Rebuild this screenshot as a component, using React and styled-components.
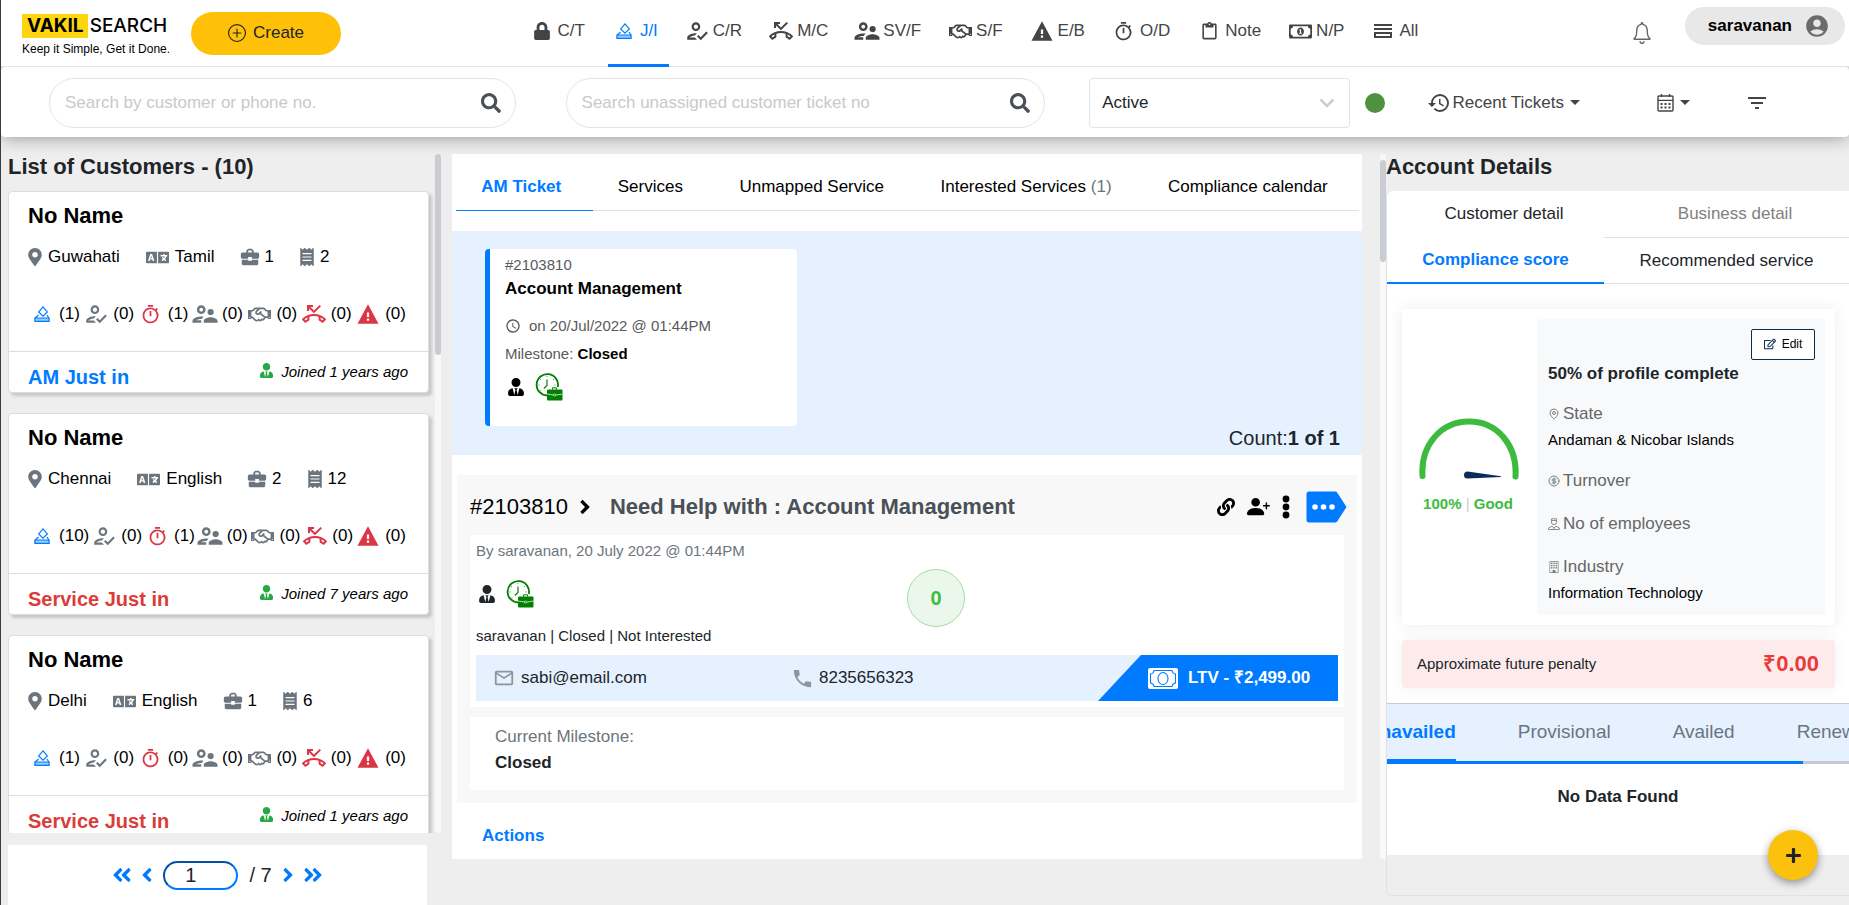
import React, { useEffect, useRef } from "react";
import styled, { createGlobalStyle } from "styled-components";
import {
  FaLock, FaRegHandshake, FaRegMoneyBillAlt, FaSearch, FaMapMarkerAlt, FaLanguage, FaReceipt,
  FaUserTie, FaAngleDoubleLeft, FaAngleDoubleRight, FaAngleLeft, FaAngleRight, FaLink, FaRegEdit, FaPlus,
} from "react-icons/fa";
import {
  MdOutlineHowToReg, MdOutlinePhoneMissed, MdOutlineSupervisorAccount, MdOutlineTimer,
  MdOutlineContentPaste, MdAccountCircle, MdHistory, MdFilterList, MdBusinessCenter,
  MdMailOutline, MdPhone, MdAccessTime,
} from "react-icons/md";
import { IoMdWarning, IoIosNotificationsOutline } from "react-icons/io";
import { BsPersonPlusFill, BsBuilding, BsPlusCircle } from "react-icons/bs";
import { MapPin, CircleDollarSign } from "lucide-react";

const color = {
  blue: "#007bff", red: "#dc3545", grey: "#6c757d", ink: "#212529", icon: "#444444",
  sky: "#e5f1ff", line: "#dee2e6", green: "#3dbb3d", yellow: "#ffc107",
};

const GlobalStyle = createGlobalStyle`
  *, *::before, *::after { box-sizing: border-box; }
  body { margin: 0; background: #eeeeee; color: ${color.ink}; font: 17px/22px "Liberation Sans", Arial, sans-serif; }
  button, input, select { font: inherit; color: inherit; }
  button { background: none; border: 0; padding: 0; cursor: pointer; }
  h1, h2, h3, p, ul, dl, dd { margin: 0; padding: 0; }
  ul { list-style: none; }
  a { color: inherit; text-decoration: none; }
  svg { flex: none; display: block; }
`;

/* ---------- drawings ---------- */

const VoteIcon = ({ size = 16 }) => (
  <svg width={size} height={size} viewBox="0 0 16 16" fill="none" stroke="currentColor" strokeWidth="1.2">
    <path d="M9 .9l4.300 5-4.300 4.200-4.300-4.200z" />
    <path d="M4.600 9L1.200 12M13 9l1.800 3" />
    <path d="M.9 12h14.200v3.300H.9z" fill="currentColor" fillOpacity=".4" />
  </svg>
);

const ListIcon = () => (
  <svg width="18" height="16" viewBox="0 0 18 16" fill="currentColor">
    <path d="M0 1h18v2H0zM0 5h18v2H0zM0 9h18v6H0zm2 2v2h14v-2z" fillRule="evenodd" />
  </svg>
);

const CalendarIcon = () => (
  <svg width="17" height="18" viewBox="0 0 17 18" fill="none" stroke="currentColor" strokeWidth="1.4">
    <rect x="1" y="2" width="15" height="15" rx="1" />
    <path d="M1 6.4h15M4.5 0v3M12.500 0v3" />
    <path d="M3.500 10h10M3.500 13.400h10" strokeWidth="2" strokeDasharray="2 2" />
  </svg>
);

const ShiftIcon = () => (
  <svg width="28" height="28" viewBox="0 0 28 28" fill="none" stroke="green">
    <path d="M12.500 22.500A10.700 10.700 0 1 1 22.800 14" strokeWidth="1.800" />
    <path d="M12 6.500v6l-3.200 3" strokeWidth="1.200" />
    <path d="M12 3.200v1M5 6l.8.8M3.500 12h1M19 6l-.8.8M20.500 12h-1M5.500 18l.8-.8" strokeWidth=".8" />
    <path d="M17.500 16.500v-1.700h4v1.700" />
    <rect x="12" y="16.500" width="15.500" height="11" rx="1" fill="green" stroke="none" />
    <path d="M12 21l6.500 1h3l6-1" stroke="#fff" strokeWidth=".7" />
    <rect x="18.300" y="21" width="2.600" height="2" rx="1" fill="green" stroke="#fff" strokeWidth=".6" />
  </svg>
);

const DotsIcon = () => (
  <svg width="8" height="24" viewBox="0 0 8 24" fill="currentColor">
    <circle cx="4" cy="4" r="3.400" /><circle cx="4" cy="12" r="3.400" /><circle cx="4" cy="20" r="3.400" />
  </svg>
);

const TagIcon = () => (
  <svg width="41" height="32" viewBox="0 0 41 32">
    <path d="M3 .5h26q1.500 0 2.300 1.200L40.500 16l-9.200 14.300q-.8 1.200-2.300 1.200H3q-2.500 0-2.500-2.500V3Q.5.5 3 .5z" fill={color.blue} />
    <g fill="#fff"><circle cx="9" cy="16" r="2.800" /><circle cx="17.500" cy="16" r="2.800" /><circle cx="26" cy="16" r="2.800" /></g>
  </svg>
);

const NoteBillIcon = () => (
  <svg width="30" height="21" viewBox="0 0 30 21" fill="none" stroke={color.blue} strokeWidth="1.100">
    <rect width="30" height="21" rx="2" fill="#fff" stroke="none" />
    <path d="M6 2.500h18a4 4 0 0 0 3.500 3.500v9a4 4 0 0 0-3.500 3.500H6A4 4 0 0 0 2.500 15V6A4 4 0 0 0 6 2.500z" />
    <ellipse cx="15" cy="10.500" rx="5" ry="6" />
  </svg>
);

const EmployeeIcon = () => (
  <svg width="12" height="12" viewBox="0 0 12 12" fill="none" stroke="currentColor" strokeWidth=".9">
    <path d="M3.500.8h5v3.400a2.500 2.500 0 0 1-5 0zM3.500 2.500h5M.6 11.500V10l3.400-1.800L6 10l2-1.800L11.400 10v1.500zM6 10v1.500" />
  </svg>
);

const Gauge = () => (
  <svg width="100" height="64" viewBox="0 0 100 64" fill="none">
    <path d="M3.500 58C1.500 27 22 3.500 50 3.500S98.500 27 96.500 58.500" stroke={color.green} strokeWidth="6" strokeLinecap="round" />
    <path d="M48.500 53.500L82 58.200v.7L48.500 60.500a3.500 3.500 0 0 1 0-7z" fill="#0b2d55" />
  </svg>
);

/* ---------- page frame ---------- */

const Page = styled.div`
  height: 100vh; min-height: 640px; min-width: 1400px;
  display: flex; flex-direction: column; overflow: hidden;
  border-left: 1px solid #3a3a48; position: relative;
`;

const TopBar = styled.header`
  display: flex; align-items: center; height: 67px; flex: none; position: relative; z-index: 2;
  padding: 0 4px 0 21px; background: #fff; border-bottom: 1px solid #e4e4e4;
`;

const Logo = styled.a`
  display: block; width: 149px; padding-top: 4px; color: #000; font-size: 12px; line-height: 14px; white-space: nowrap;
  div { display: flex; align-items: center; font: 500 19px/24px Inter, sans-serif; margin-bottom: 4px; }
  b { background: #ffd50f; padding: 0 4px 0 5px; margin-right: 2px; font-weight: 700; }
`;

const CreateButton = styled.button`
  display: flex; align-items: center; justify-content: center; gap: 7px;
  width: 150px; height: 43px; margin-left: 20px; border-radius: 22px; background: ${color.yellow};
`;

const Nav = styled.nav` display: flex; gap: 12px; margin: 0 auto; padding-right: 14px; `;

const NavTab = styled.button`
  display: flex; align-items: center; height: 67px; padding: 0 11px 4px 0;
  color: ${p => (p.$active ? color.blue : color.icon)};
  box-shadow: ${p => (p.$active ? `inset 0 -3px 0 ${color.blue}` : "none")};
  span { width: 32px; display: flex; justify-content: center; }
`;

const BellButton = styled.button` margin-right: 29px; color: #666; `;

const UserButton = styled.button`
  display: flex; align-items: center; gap: 12px; height: 38px; padding: 0 15px 0 23px;
  margin-bottom: 15px; border-radius: 19px; background: #e8e8e8; color: #000; font-weight: bold;
  svg { color: #6b6b6b; }
`;

const FilterBar = styled.div`
  display: flex; align-items: center; height: 70px; flex: none; padding: 1px 80px 0 48px;
  background: #fff; border-radius: 4px; box-shadow: 0 0 18px rgba(0, 0, 0, 0.4); position: relative; z-index: 1;
`;

const SearchBox = styled.form`
  display: flex; align-items: center; flex: ${p => p.$grow} 1 0; height: 50px;
  padding: 0 14px 0 15px; border: 1px solid #e4e4e4; border-radius: 25px; color: #495057;
  margin-right: ${p => p.$after};
  input { flex: 1; min-width: 0; border: 0; padding: 0; outline: 0; background: none; }
  input::placeholder { color: #c9c9c9; opacity: 1; }
`;

const StatusField = styled.div`
  flex: 232 1 0; display: flex; align-items: center; height: 50px; padding: 0 14px 0 12px;
  border: 1px solid #e4e4e4; border-radius: 4px; color: #cccccc;
  select { flex: 1; border: 0; background: none; appearance: none; outline: 0; padding: 0; color: ${color.ink}; }
`;

const OnlineDot = styled.span` width: 20px; height: 20px; margin: 0 42px 0 15px; border-radius: 50%; background: #50913f; `;

const MenuButton = styled.button`
  display: flex; align-items: center; gap: 2px; color: ${color.icon}; margin-right: ${p => p.$after || "0"};
`;

const Caret = styled.i` border: 5px solid transparent; border-top-color: currentColor; border-bottom: 0; margin-left: 4px; `;

const Main = styled.main`
  flex: 1; min-height: 0; display: grid; column-gap: 11px; padding: 17px 0 0 7px;
  grid-template-columns: minmax(0, 433fr) minmax(0, 910fr) minmax(0, 476fr);
`;

const PaneTitle = styled.h2` font-size: 22px; line-height: 26px; margin-bottom: 11px; `;

const ScrollBar = styled.div`
  width: 6px; flex: none; border-radius: 3px; background: #f8f8f8; padding-top: ${p => p.$top || "0"};
  &::before { content: ""; display: block; height: ${p => p.$thumb}; border-radius: 3px; background: #c9cdd1; }
`;

/* ---------- customer list ---------- */

const ListPane = styled.section` display: flex; flex-direction: column; min-height: 0; `;
const ListScroll = styled.div` display: flex; flex: 1; min-height: 0; `;
const ListBody = styled.div`
  flex: 1; min-width: 0; padding: 0 6px 0 0; overflow-y: auto; scrollbar-width: none; border-radius: 0 0 0 4px;
`;

const CustomerCard = styled.article`
  margin-bottom: 20px; background: #fff; color: #000; border: 1px solid #dddddd; border-radius: 4px;
  box-shadow: 3px 3px 3px rgba(0, 0, 0, 0.16); padding-top: 11px;
  h3 { font-size: 22px; line-height: 26px; padding: 0 19px; }
`;

const FactRow = styled.ul`
  display: flex; gap: 26px; margin: 17px 19px 0; height: 22px;
  li { display: flex; align-items: center; gap: 6px; }
`;

const FactIcon = styled.span` width: ${p => p.$w}; display: flex; justify-content: center; color: ${color.grey}; `;

const CountRow = styled.ul`
  display: flex; justify-content: space-between; align-items: center; height: 24px; margin: 34px 22px 25px 20px;
`;

const CountItem = styled.li`
  display: flex; align-items: center; gap: 4px;
  span { width: 26px; display: flex; justify-content: center; color: ${p => p.$tint}; }
`;

const CardFoot = styled.footer`
  display: flex; justify-content: space-between; align-items: flex-start; height: 41px;
  padding: 11px 20px 0 19px; border-top: 1px solid #dddddd;
  strong { font-size: 20px; line-height: 24px; padding-top: 2px; color: ${p => p.$tint}; }
  em { display: flex; gap: 7px; font-size: 15px; line-height: 18px; }
  svg { color: #28a745; }
`;

const Pager = styled.form`
  display: flex; align-items: center; justify-content: center; gap: 11px; height: 60px; margin: 12px 14px 0 0;
  background: #fff; color: ${color.blue}; font-size: 20px;
  input {
    width: 75px; height: 29px; border: 2px inset ${color.blue}; border-radius: 15px;
    background: #fff; color: ${color.ink}; text-align: center; padding: 0 20px 0 0; outline: 0;
  }
  span { color: ${color.ink}; }
`;
const PageButton = styled.button` display: flex; justify-content: center; width: ${p => p.$w}; `;

/* ---------- ticket pane ---------- */

const TicketPane = styled.section` align-self: start; background: #fff; padding-bottom: 12px; `;

const Tabs = styled.div` display: flex; margin: 0 3px 0 4px; `;
const Tab = styled.button`
  flex: 1 1 auto; padding: 21px 6px 11px 0; line-height: 24px; color: ${p => (p.$active ? color.blue : "#000")};
  font-weight: ${p => (p.$active ? "bold" : "normal")};
  border-bottom: 1px solid ${p => (p.$active ? color.blue : color.line)};
  span { color: ${color.grey}; }
`;

const TicketStrip = styled.div` margin-top: 20px; padding: 18px 22px 5px 33px; background: ${color.sky}; `;
const TicketCard = styled.article`
  width: 312px; min-height: 177px; padding: 7px 15px; background: #fff; color: #5a5a5a;
  border-left: 5px solid ${color.blue}; border-radius: 4px; font-size: 15px; line-height: 18px;
  h3 { font-size: 17px; line-height: 22px; margin: 4px 0 17px; color: #000; }
  b { color: #000; }
`;
const TimeLine = styled.p` display: flex; align-items: center; gap: 8px; margin-bottom: 10px; `;
const BadgeRow = styled.div` display: flex; align-items: center; gap: 10px; height: 28px; margin-top: ${p => p.$top}; padding-left: 2px; color: ${p => p.$tint}; `;
const CountLine = styled.p` text-align: right; font-size: 20px; line-height: 24px; `;

const Detail = styled.section` margin: 20px 5px 0; padding-bottom: 13px; background: #f8f8f8; `;
const DetailHead = styled.header`
  display: flex; align-items: center; height: 60px; padding: 3px 10px 0 13px; font-size: 22px; color: #000;
  > svg { margin: 0 14px 0 6px; }
  h2 { flex: 1; font-size: 22px; line-height: 26px; color: #495057; }
`;
const Actions = styled.div`
  display: flex; align-items: center;
  button + button { margin-left: 12px; }
  button:last-child { margin-left: 16px; }
`;

const WhiteBox = styled.div`
  margin: 0 13px ${p => p.$after || "0"}; padding: ${p => p.$pad}; background: #fff;
`;
const Summary = styled.div`
  display: grid; grid-template-columns: 1fr 1fr; font-size: 15px; line-height: 18px; margin-bottom: 10px;
  small { font-size: 15px; color: ${color.grey}; }
  p { margin-top: 19px; }
`;
const Score = styled.div`
  width: 58px; height: 58px; margin-top: 27px; display: grid; place-items: center; border-radius: 50%;
  border: 1px solid #a3dda3; background: #ebf7eb; color: ${color.green}; font-size: 20px; font-weight: bold;
`;
const ContactBar = styled.div`
  display: grid; grid-template-columns: 315fr 307fr 240px; height: 46px; background: ${color.sky};
  a { display: flex; align-items: center; gap: 5px; }
  a:first-child { padding-left: 17px; gap: 6px; }
  a svg { color: #8f959b; }
`;
const Ltv = styled.div`
  display: flex; align-items: center; gap: 10px; padding-left: 50px; background: ${color.blue}; color: #fff;
  font-weight: bold; clip-path: polygon(43px 0, 100% 0, 100% 100%, 0 100%);
`;
const Milestone = styled.dl` dt { color: ${color.grey}; margin-bottom: 4px; } dd { font-weight: bold; } `;
const ActionsTitle = styled.h3` margin: 22px 30px 0; font-size: 17px; color: ${color.blue}; `;

/* ---------- account pane ---------- */

const AccountPane = styled.section` display: flex; padding-left: 7px; min-height: 0; `;
const AccountBody = styled.div` flex: 1; min-width: 0; `;
const AccountScroll = styled(ScrollBar)` align-self: flex-start; height: 705px; `;
const Panel = styled.div`
  border: solid ${color.line}; border-width: 0 0 1px 1px; border-radius: 6px 0 0 6px; padding-bottom: 40px;
  margin-bottom: 8px; overflow: hidden;
`;
const PanelTabs = styled.div` display: grid; background: #fff; grid-template-columns: ${p => p.$cols}; `;
const PanelTab = styled.button`
  padding: 12px 0; color: ${p => (p.$active ? color.blue : p.$muted ? "#808080" : color.ink)};
  font-weight: ${p => (p.$active ? "bold" : "normal")};
`;
const LinedTab = styled(PanelTab)`
  padding: 11px 0; border-top: 1px solid ${p => (p.$active ? "transparent" : color.line)};
  border-bottom: ${p => (p.$active ? `2px solid ${color.blue}` : `1px solid ${color.line}`)};
`;
const PanelBody = styled.div` background: #fff; padding: 25px 14px 15px 15px; `;
const ScoreCard = styled.div`
  display: grid; grid-template-columns: 135px minmax(0, 1fr); padding: 10px 10px 10px 0;
  border-radius: 4px; box-shadow: 0 0 16px rgba(0, 0, 0, 0.08);
`;
const GaugeBox = styled.div`
  padding: 99px 0 0 17px; font-size: 15px; line-height: 18px; font-weight: bold; color: ${color.green};
  p { width: 98px; text-align: center; margin-top: 13px; }
  i { font-style: normal; font-weight: normal; color: #cccccc; }
`;
const Profile = styled.div`
  padding: 10px 10px 13px 11px; border-radius: 4px; background: #f7f9fb;
  h3 { font-size: 17px; margin: 3px 0 18px; }
`;
const EditButton = styled.button`
  display: flex; align-items: center; justify-content: center; gap: 6px; width: 64px; height: 31px; margin-left: auto;
  padding-bottom: 2px; border: 1px solid #0b2d55; border-radius: 2px; background: #fff; font-size: 12px; color: #000;
  svg { color: #0b2d55; }
`;
const Field = styled.dl`
  dt { display: flex; align-items: center; gap: 3px; color: #666666; }
  dt svg { color: #808080; }
  dd { font-size: 15px; line-height: 18px; margin-top: 6px; color: #000; }
  & + & { margin-top: 21px; }
`;
const Penalty = styled.div`
  display: flex; align-items: center; justify-content: space-between; height: 48px; padding: 0 16px 0 15px; margin-top: 15px;
  border-radius: 4px; background: #fdebeb; box-shadow: 0 0 16px rgba(0, 0, 0, 0.06); font-size: 15px;
  strong { font-size: 22px; color: #e93b3b; }
`;
const ServiceTabs = styled.div`
  display: flex; gap: 62px; overflow-x: auto; scrollbar-width: none; background: ${color.sky};
  border-top: 1px solid #c5cad0;
`;
const ServiceTab = styled.button`
  flex: none; padding: 16px 0 15px; font-size: 19px; line-height: 24px;
  color: ${p => (p.$active ? color.blue : color.grey)}; font-weight: ${p => (p.$active ? "bold" : "normal")};
  border-bottom: 2px solid ${p => (p.$active ? color.blue : "transparent")};
  &:last-child { padding-right: 60px; }
`;
const Track = styled.div` height: 3px; background: #c5cad0; &::before { content: ""; display: block; height: 3px; width: 90%; background: ${color.blue}; } `;
const Empty = styled.p` padding: 22px 0 47px; background: #fff; text-align: center; font-weight: bold; `;

const Fab = styled.button`
  position: fixed; right: 31px; bottom: 25px; z-index: 2; width: 50px; height: 50px; border-radius: 50%;
  display: grid; place-items: center; background: #fbc10d; box-shadow: 0 3px 8px rgba(0, 0, 0, 0.4);
`;

/* ---------- data ---------- */

const navTabs = [
  ["C/T", <FaLock size={18} />],
  ["J/I", <VoteIcon />],
  ["C/R", <MdOutlineHowToReg size={26} />],
  ["M/C", <MdOutlinePhoneMissed size={24} />],
  ["SV/F", <MdOutlineSupervisorAccount size={30} />],
  ["S/F", <FaRegHandshake size={23} />],
  ["E/B", <IoMdWarning size={24} />],
  ["O/D", <MdOutlineTimer size={21} />],
  ["Note", <MdOutlineContentPaste size={19} />],
  ["N/P", <FaRegMoneyBillAlt size={23} />],
  ["All", <ListIcon />],
];

const countIcons = [
  [<VoteIcon />, color.blue],
  [<MdOutlineHowToReg size={26} />, color.grey],
  [<MdOutlineTimer size={21} />, color.red],
  [<MdOutlineSupervisorAccount size={30} />, color.grey],
  [<FaRegHandshake size={23} />, color.grey],
  [<MdOutlinePhoneMissed size={24} />, color.red],
  [<IoMdWarning size={24} />, color.red],
];

const customers = [
  { name: "No Name", city: "Guwahati", lang: "Tamil", cases: 1, bills: 2, counts: [1, 0, 1, 0, 0, 0, 0], state: "AM Just in", tint: color.blue, years: 1 },
  { name: "No Name", city: "Chennai", lang: "English", cases: 2, bills: 12, counts: [10, 0, 1, 0, 0, 0, 0], state: "Service Just in", tint: "#dc3c37", years: 7 },
  { name: "No Name", city: "Delhi", lang: "English", cases: 1, bills: 6, counts: [1, 0, 0, 0, 0, 0, 0], state: "Service Just in", tint: "#dc3c37", years: 1 },
];

const fields = [
  ["State", <MapPin size={12} />, "Andaman & Nicobar Islands"],
  ["Turnover", <CircleDollarSign size={12} />],
  ["No of employees", <EmployeeIcon />],
  ["Industry", <BsBuilding size={12} />, "Information Technology"],
];

/* ---------- components ---------- */

function Search({ label, grow, after }) {
  return (
    <SearchBox $grow={grow} $after={after} onSubmit={e => e.preventDefault()}>
      <input type="search" aria-label={label} placeholder={label} />
      <button aria-label="Search"><FaSearch size={20} /></button>
    </SearchBox>
  );
}

function Customer({ c }) {
  return (
    <CustomerCard>
      <h3>{c.name}</h3>
      <FactRow>
        <li><FactIcon $w="14px"><FaMapMarkerAlt size={18} /></FactIcon>{c.city}</li>
        <li><FactIcon $w="23px"><FaLanguage size={23} /></FactIcon>{c.lang}</li>
        <li><FactIcon $w="18px"><MdBusinessCenter size={22} /></FactIcon>{c.cases}</li>
        <li><FactIcon $w="14px"><FaReceipt size={18} /></FactIcon>{c.bills}</li>
      </FactRow>
      <CountRow>
        {countIcons.map(([icon, tint], i) => (
          <CountItem key={i} $tint={tint}><span>{icon}</span>({c.counts[i]})</CountItem>
        ))}
      </CountRow>
      <CardFoot $tint={c.tint}>
        <strong>{c.state}</strong>
        <em><FaUserTie size={15} />Joined {c.years} years ago</em>
      </CardFoot>
    </CustomerCard>
  );
}

function ServiceStrip() {
  const strip = useRef(null);
  useEffect(() => { strip.current.scrollLeft = 21; }, []);
  return (
    <ServiceTabs ref={strip}>
      <ServiceTab $active>Unavailed</ServiceTab>
      <ServiceTab>Provisional</ServiceTab>
      <ServiceTab>Availed</ServiceTab>
      <ServiceTab>Renewal</ServiceTab>
    </ServiceTabs>
  );
}

export default function App() {
  return (
    <Page>
      <GlobalStyle />
      <TopBar>
        <Logo href="#"><div><b>VAKIL</b>SEARCH</div>Keep it Simple, Get it Done.</Logo>
        <CreateButton><BsPlusCircle size={18} />Create</CreateButton>
        <Nav>
          {navTabs.map(([name, icon]) => (
            <NavTab key={name} $active={name === "J/I"}><span>{icon}</span>{name}</NavTab>
          ))}
        </Nav>
        <BellButton aria-label="Notifications"><IoIosNotificationsOutline size={28} /></BellButton>
        <UserButton>saravanan<MdAccountCircle size={26} /></UserButton>
      </TopBar>
      <FilterBar>
        <Search label="Search by customer or phone no." grow={435} after="50px" />
        <Search label="Search unassigned customer ticket no" grow={448} after="44px" />
        <StatusField>
          <select aria-label="Status" defaultValue="Active"><option>Active</option><option>Inactive</option></select>
          <svg width="16" height="10" viewBox="0 0 16 10" fill="none" stroke="currentColor" strokeWidth="2.500"><path d="M1.500 1.500L8 8l6.500-6.500" /></svg>
        </StatusField>
        <OnlineDot />
        <MenuButton $after="77px"><MdHistory size={24} />Recent Tickets<Caret /></MenuButton>
        <MenuButton aria-label="Date range" $after="55px"><CalendarIcon /><Caret /></MenuButton>
        <MenuButton aria-label="Filter"><MdFilterList size={24} /></MenuButton>
      </FilterBar>
      <Main>
        <ListPane>
          <ListScroll>
            <ListBody>
              <PaneTitle>List of Customers - (10)</PaneTitle>
              {customers.map((c, i) => <Customer key={i} c={c} />)}
            </ListBody>
            <ScrollBar $thumb="201px" />
          </ListScroll>
          <Pager onSubmit={e => e.preventDefault()}>
            <PageButton $w="18px" type="button" aria-label="First page"><FaAngleDoubleLeft size={22} /></PageButton>
            <PageButton $w="10px" type="button" aria-label="Previous page"><FaAngleLeft size={22} /></PageButton>
            <input aria-label="Page" defaultValue="1" />
            <span>/ 7</span>
            <PageButton $w="10px" type="button" aria-label="Next page"><FaAngleRight size={22} /></PageButton>
            <PageButton $w="18px" type="button" aria-label="Last page"><FaAngleDoubleRight size={22} /></PageButton>
          </Pager>
        </ListPane>

        <TicketPane>
          <Tabs>
            <Tab $active>AM Ticket</Tab>
            <Tab>Services</Tab>
            <Tab>Unmapped Service</Tab>
            <Tab>Interested Services <span>(1)</span></Tab>
            <Tab>Compliance calendar</Tab>
          </Tabs>
          <TicketStrip>
            <TicketCard>
              <p>#2103810</p>
              <h3>Account Management</h3>
              <TimeLine><MdAccessTime size={16} />on 20/Jul/2022 @ 01:44PM</TimeLine>
              <p>Milestone: <b>Closed</b></p>
              <BadgeRow $top="10px" $tint="#000"><FaUserTie size={18} /><ShiftIcon /></BadgeRow>
            </TicketCard>
            <CountLine>Count:<b>1 of 1</b></CountLine>
          </TicketStrip>
          <Detail>
            <DetailHead>
              #2103810<FaAngleRight size={22} />
              <h2>Need Help with : Account Management</h2>
              <Actions>
                <button aria-label="Copy link"><FaLink size={18} /></button>
                <button aria-label="Add person"><BsPersonPlusFill size={23} /></button>
                <button aria-label="More"><DotsIcon /></button>
                <button aria-label="Options"><TagIcon /></button>
              </Actions>
            </DetailHead>
            <WhiteBox $pad="7px 6px 6px" $after="10px">
              <Summary>
                <div>
                  <small>By saravanan, 20 July 2022 @ 01:44PM</small>
                  <BadgeRow $top="20px" $tint={color.ink}><FaUserTie size={18} /><ShiftIcon /></BadgeRow>
                  <p>saravanan | Closed | Not Interested</p>
                </div>
                <Score>0</Score>
              </Summary>
              <ContactBar>
                <a href="mailto:sabi@email.com"><MdMailOutline size={22} />sabi@email.com</a>
                <a href="tel:8235656323"><MdPhone size={23} />8235656323</a>
                <Ltv><NoteBillIcon />LTV - ₹2,499.00</Ltv>
              </ContactBar>
            </WhiteBox>
            <WhiteBox $pad="9px 25px 16px">
              <Milestone><dt>Current Milestone:</dt><dd>Closed</dd></Milestone>
            </WhiteBox>
          </Detail>
          <ActionsTitle>Actions</ActionsTitle>
        </TicketPane>

        <AccountPane>
          <AccountScroll $thumb="102px" $top="6px" />
          <AccountBody>
            <PaneTitle>Account Details</PaneTitle>
            <Panel>
              <PanelTabs $cols="234fr 228fr">
                <PanelTab>Customer detail</PanelTab>
                <PanelTab $muted>Business detail</PanelTab>
              </PanelTabs>
              <PanelTabs $cols="217fr 245fr">
                <LinedTab $active>Compliance score</LinedTab>
                <LinedTab>Recommended service</LinedTab>
              </PanelTabs>
              <PanelBody>
                <ScoreCard>
                  <GaugeBox><Gauge /><p>100% <i>|</i> Good</p></GaugeBox>
                  <Profile>
                    <EditButton><FaRegEdit size={12} />Edit</EditButton>
                    <h3>50% of profile complete</h3>
                    {fields.map(([name, icon, value]) => (
                      <Field key={name}><dt>{icon}{name}</dt>{value && <dd>{value}</dd>}</Field>
                    ))}
                  </Profile>
                </ScoreCard>
                <Penalty>Approximate future penalty<strong>₹0.00</strong></Penalty>
              </PanelBody>
              <ServiceStrip />
              <Track />
              <Empty>No Data Found</Empty>
            </Panel>
          </AccountBody>
        </AccountPane>
      </Main>
      <Fab aria-label="Add"><FaPlus size={17} /></Fab>
    </Page>
  );
}
